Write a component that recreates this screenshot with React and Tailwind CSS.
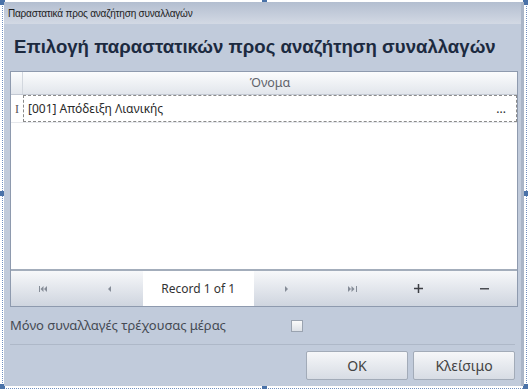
import { useState } from "react";

const font = { fontFamily: '"Noto Sans", "DejaVu Sans", sans-serif' };

function Handle({ className }) {
  return <div className={"absolute w-[5px] h-[5px] bg-[#4a72a8] " + className} />;
}

function NavButton({ children }) {
  return <div className="flex-1 flex items-center justify-center">{children}</div>;
}

function Tri({ dir = "left", w = 8 }) {
  return (
    <svg width={w} height="6" viewBox={`0 0 ${w} 6`} fill="#858c97">
      {dir === "left" ? <path d="M0 3 L3 0 L3 6 Z" /> : <path d="M0 0 L3 3 L0 6 Z" />}
    </svg>
  );
}

function App() {
  const [onlyToday, setOnlyToday] = useState(false);

  return (
    <div className="relative w-[529px] h-[391px] bg-white" style={font}>
      {/* designer selection frame */}
      <div className="absolute inset-[2px] border border-dotted border-[#6f8fc0]" />
      <Handle className="left-0 top-0" />
      <Handle className="right-[1px] top-0" />
      <Handle className="left-0 bottom-[2px]" />
      <Handle className="right-[1px] bottom-[2px]" />
      <Handle className="right-[1px] top-[191px]" />
      <Handle className="left-0 top-[191px]" />
      <Handle className="left-[262px] top-0" />
      <Handle className="left-[262px] bottom-[2px]" />

      {/* window */}
      <div className="absolute left-[4px] top-[2px] w-[520px] h-[384px] flex flex-col bg-[#c1cbdb] border-r-[3px] border-[#aab5c7]">
        <div
          className="h-[22px] flex items-center px-[4px] text-[10px] tracking-[-0.2px] text-[#1d1d1d] bg-gradient-to-b from-[#b3bed0] to-[#d3d9e4]"
          style={{ fontFamily: '"Liberation Sans", sans-serif' }}
        >
          Παραστατικά προς αναζήτηση συναλλαγών
        </div>

        <div className="flex-1 flex flex-col px-[6px]">
          <h1
            className="h-[45px] flex items-center pl-[4px] whitespace-nowrap text-[18.6px] font-bold text-[#1c2a40]"
            style={{ fontFamily: '"Liberation Sans", sans-serif' }}
          >
            Επιλογή παραστατικών προς αναζήτηση συναλλαγών
          </h1>

          {/* grid */}
          <div className="mt-[2px] w-[508px] h-[236px] flex flex-col border border-[#8e9aae] bg-white">
            <div className="h-[23px] flex bg-gradient-to-b from-[#fbfcfd] to-[#e2e6ec] border-b border-[#c3c9d3]">
              <div className="w-[12px] border-r border-[#d2d7de]" />
              <div className="flex-1 flex items-center justify-center text-[12.5px] text-[#5f636a]">
                Όνομα
              </div>
            </div>
            <div className="h-[28px] flex border-b border-[#e6e8ec]">
              <div
                className="w-[12px] flex items-center justify-center text-[12px] text-[#555]"
                style={{ fontFamily: '"Liberation Serif", serif' }}
              >
                I
              </div>
              <div className="flex-1 flex items-center justify-between border border-dashed border-[#8a8a8a] pl-[4px] pr-[10px] text-[12px] text-[#2a2a2a]">
                <span>[001] Απόδειξη Λιανικής</span>
                <span className="text-[12px] leading-none">...</span>
              </div>
            </div>
            <div className="flex-1" />
            <div className="h-[37px] flex border-t-2 border-[#a3adbb] bg-gradient-to-b from-[#f7f8fa] to-[#cfd5df]">
              <NavButton>
                <svg width="9" height="6" viewBox="0 0 9 6" fill="#858c97">
                  <rect x="0" y="0" width="1" height="6" />
                  <path d="M1.5 3 L4.5 0 L4.5 6 Z" />
                  <path d="M5 3 L8 0 L8 6 Z" />
                </svg>
              </NavButton>
              <NavButton>
                <Tri dir="left" w={3} />
              </NavButton>
              <div className="w-[111px] bg-white flex items-center justify-center text-[12px] text-[#333]">
                Record 1 of 1
              </div>
              <NavButton>
                <Tri dir="right" w={3} />
              </NavButton>
              <NavButton>
                <svg width="9" height="6" viewBox="0 0 9 6" fill="#858c97">
                  <path d="M0 0 L3 3 L0 6 Z" />
                  <path d="M3.5 0 L6.5 3 L3.5 6 Z" />
                  <rect x="8" y="0" width="1" height="6" />
                </svg>
              </NavButton>
              <NavButton>
                <svg width="9" height="9" viewBox="0 0 9 9" fill="#3c3f44">
                  <rect x="3.75" y="0" width="1.5" height="9" />
                  <rect x="0" y="3.75" width="9" height="1.5" />
                </svg>
              </NavButton>
              <NavButton>
                <svg width="9" height="2" viewBox="0 0 9 2" fill="#4a4d52">
                  <rect x="0" y="0" width="9" height="1.5" />
                </svg>
              </NavButton>
            </div>
          </div>

          <div className="h-[38px] flex items-center border-b border-[#aeb8c8]">
            <span className="w-[281px] text-[13px] text-[#454a53]">Μόνο συναλλαγές τρέχουσας μέρας</span>
            <button
              onClick={() => setOnlyToday(!onlyToday)}
              className="w-[12px] h-[12px] border border-[#9aa3b0] bg-gradient-to-b from-[#fafafa] to-[#dde1e7] text-[9px] leading-none"
            >
              {onlyToday ? "✓" : ""}
            </button>
          </div>

          <div className="flex-1 flex justify-end items-center gap-[5px]">
            <button className="w-[102px] h-[29px] rounded-[2px] border border-[#a2abb8] bg-gradient-to-b from-[#f6f7f9] to-[#d7dce4] text-[14px] text-[#444]">
              OK
            </button>
            <button className="w-[102px] h-[29px] rounded-[2px] border border-[#a2abb8] bg-gradient-to-b from-[#f6f7f9] to-[#d7dce4] text-[14px] text-[#444]">
              Κλείσιμο
            </button>
          </div>
        </div>
      </div>
    </div>
  );
}

export default App;
